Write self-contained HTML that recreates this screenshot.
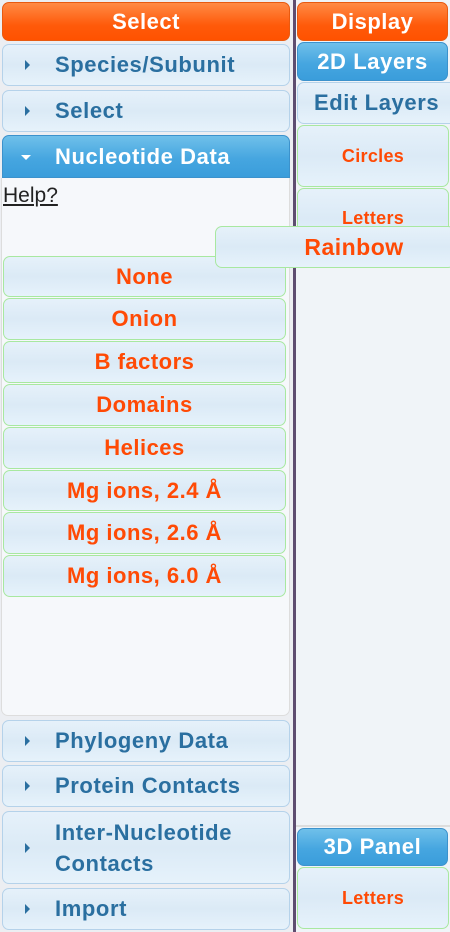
<!DOCTYPE html><html><head><style>
body{margin:0;width:450px;height:932px;position:relative;background:#eceef2;font-family:"Liberation Sans",sans-serif;font-weight:bold;overflow:hidden}
.a{position:absolute;box-sizing:border-box;border-radius:7px;display:flex;align-items:center;justify-content:center;white-space:nowrap}
.or{background:linear-gradient(#ff8a45,#ff5a0a 60%,#ff5200);color:#fff;font-size:22px;letter-spacing:0.5px;border:1px solid #e85a10}
.bl{background:linear-gradient(#6fc0ea,#46a6e0 55%,#3a9ddb);color:#fff;font-size:22px;letter-spacing:0.6px;border:1px solid #3c92cc}
.lt{background:linear-gradient(#e6f1fa,#dbeaf6 50%,#e6f2fb);border:1px solid #b5d2ea;color:#2a6fa0;font-size:22px;letter-spacing:0.6px;justify-content:flex-start;padding-left:52px}
.tr:before,.bl.h:before{content:"";position:absolute;left:22px;top:50%;margin-top:-5px;border-left:5px solid #2a6fa0;border-top:5px solid transparent;border-bottom:5px solid transparent}
.bl.h{justify-content:flex-start;padding-left:52px;border-radius:7px 7px 0 0}
.bl.h:before{border-left:5px solid transparent;border-right:5px solid transparent;border-top:5px solid #fff;border-bottom:0;margin-top:-2px;left:18px}
.gb{background:linear-gradient(#e6f1fa,#dbeaf6 50%,#e6f2fb);border:1px solid #a8e8a0;color:#ff4a05;font-size:22px;letter-spacing:0.5px}
.gs{font-size:18px;letter-spacing:0.3px}
</style></head><body>
<div style="position:absolute;left:293px;top:0;width:3px;height:932px;background:#5e4d70"></div>
<div style="position:absolute;left:296px;top:0;width:154px;height:932px;background:#f0f4f8"></div>
<div style="position:absolute;left:296px;top:825px;width:154px;height:2px;background:#ddd"></div>
<div class="a or" style="left:2px;top:2px;width:288px;height:39px">Select</div>
<div class="a lt tr" style="left:2px;top:44px;width:288px;height:42px">Species/Subunit</div>
<div class="a lt tr" style="left:2px;top:90px;width:288px;height:42px">Select</div>
<div class="a bl h" style="left:2px;top:135px;width:288px;height:43px">Nucleotide Data</div>
<div style="position:absolute;left:1px;top:178px;width:289px;height:538px;background:#f6f8fb;border:1px solid #ddd;border-top:0;border-radius:0 0 7px 7px;box-sizing:border-box"></div>
<div style="position:absolute;left:3px;top:184px;font-weight:normal;font-size:21px;color:#222;text-decoration:underline">Help?</div>
<div class="a gb" style="left:3px;top:256px;width:283px;height:41px">None</div>
<div class="a gb" style="left:3px;top:298px;width:283px;height:42px">Onion</div>
<div class="a gb" style="left:3px;top:341px;width:283px;height:42px">B factors</div>
<div class="a gb" style="left:3px;top:384px;width:283px;height:42px">Domains</div>
<div class="a gb" style="left:3px;top:427px;width:283px;height:42px">Helices</div>
<div class="a gb" style="left:3px;top:470px;width:283px;height:41px">Mg ions, 2.4 Å</div>
<div class="a gb" style="left:3px;top:512px;width:283px;height:42px">Mg ions, 2.6 Å</div>
<div class="a gb" style="left:3px;top:555px;width:283px;height:42px">Mg ions, 6.0 Å</div>
<div class="a lt tr" style="left:2px;top:720px;width:288px;height:42px">Phylogeny Data</div>
<div class="a lt tr" style="left:2px;top:765px;width:288px;height:42px">Protein Contacts</div>
<div class="a lt tr" style="left:2px;top:811px;width:288px;height:73px;line-height:31px;white-space:normal">Inter-Nucleotide<br>Contacts</div>
<div class="a lt tr" style="left:2px;top:888px;width:288px;height:42px">Import</div>
<div class="a or" style="left:297px;top:2px;width:151px;height:39px">Display</div>
<div class="a bl" style="left:297px;top:42px;width:151px;height:39px">2D Layers</div>
<div class="a lt" style="left:297px;top:82px;width:158px;height:42px;padding-left:16px;border-radius:7px 0 0 7px">Edit Layers</div>
<div class="a gb gs" style="left:297px;top:125px;width:152px;height:62px">Circles</div>
<div class="a gb gs" style="left:297px;top:188px;width:152px;height:62px;align-items:flex-start;padding-top:19px">Letters</div>
<div class="a gb" style="left:215px;top:226px;width:240px;height:42px;padding-left:38px;font-size:23px">Rainbow</div>
<div class="a bl" style="left:297px;top:828px;width:151px;height:38px">3D Panel</div>
<div class="a gb gs" style="left:297px;top:867px;width:152px;height:62px">Letters</div>
</body></html>
